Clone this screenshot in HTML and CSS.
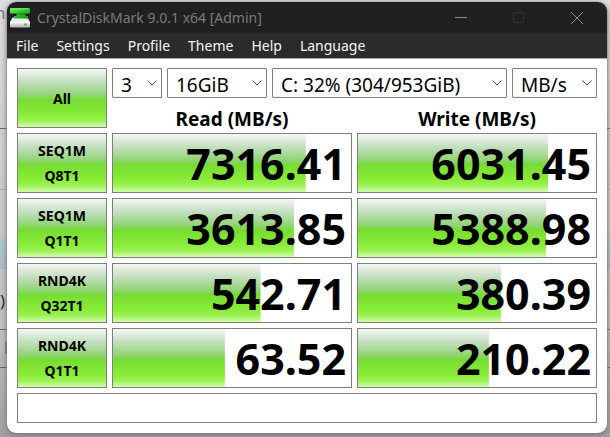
FILE: index.html
```
<!DOCTYPE html>
<html lang="en">
<head>
<meta charset="utf-8">
<title>CrystalDiskMark 9.0.1 x64 [Admin]</title>
<link rel="stylesheet" href="styles.css">
</head>
<body>
<div class="backdrop" aria-hidden="true">
  <span class="peek peek-top">n</span>
  <span class="peek peek-low">)</span>
  <span class="peek-block"></span>
</div>
<main class="window">
  <header class="titlebar">
    <svg class="app-icon" viewBox="0 0 20 20" aria-hidden="true">
      <defs>
        <linearGradient id="g" x1="0" y1="0" x2="1" y2="1"><stop offset="0" stop-color="#7be96a"/><stop offset=".45" stop-color="#2fc42a"/><stop offset="1" stop-color="#0f8f14"/></linearGradient>
        <linearGradient id="d" x1="0" y1="0" x2="0" y2="1"><stop offset="0" stop-color="#e2e8e0"/><stop offset=".5" stop-color="#f0f0f0"/><stop offset="1" stop-color="#aeb2b4"/></linearGradient>
      </defs>
      <path d="M2.500 9.500h15L20 14v4.500q0 1-1 1H1q-1 0-1-1V14z" fill="url(#d)"/>
      <path d="M.5 14.500h19" stroke="#fafafa"/>
      <path d="M1 0h18q1 0 1 1v3.500q0 1-1 1h-3.500V8H18v2.500H4V8h2.500V5.500H1q-1 0-1-1V1q0-1 1-1z" fill="url(#g)"/>
      <path d="M1.500 1h17" stroke="#7be96d"/>
      <path d="M6.500 6h9" stroke="#087c0b"/>
      <path d="M14 16.500h3" stroke="#5cb552" stroke-width="2"/>
    </svg>
    <h1 class="title">CrystalDiskMark 9.0.1 x64 [Admin]</h1>
    <div class="controls">
      <button class="control" aria-label="Minimize"><svg viewBox="0 0 12 12"><path d="M0 5.500h12"/></svg></button>
      <button class="control" aria-label="Maximize" disabled><svg viewBox="0 0 12 12"><path d="M.5.5h10v10H.5z"/></svg></button>
      <button class="control" aria-label="Close"><svg viewBox="0 0 12 12"><path d="M0 0l12 12M12 0L0 12"/></svg></button>
    </div>
  </header>
  <nav class="menu">
    <button>File</button><button>Settings</button><button>Profile</button><button>Theme</button><button>Help</button><button>Language</button>
  </nav>
  <section class="content">
    <table class="results">
      <colgroup><col class="col-test"><col><col></colgroup>
      <thead>
        <tr class="row-options">
          <td rowspan="2"><button class="test">All</button></td>
          <td colspan="2">
            <div class="options">
              <div class="pick pick-count"><select aria-label="Test count"><option>3</option></select><svg viewBox="0 0 10 6"><path d="M.5.5L5 5 9.500.5"/></svg></div>
              <div class="pick pick-size"><select aria-label="Test size"><option>16GiB</option></select><svg viewBox="0 0 10 6"><path d="M.5.5L5 5 9.500.5"/></svg></div>
              <div class="pick pick-drive"><select aria-label="Drive"><option>C: 32% (304/953GiB)</option></select><svg viewBox="0 0 10 6"><path d="M.5.5L5 5 9.500.5"/></svg></div>
              <div class="pick pick-unit"><select aria-label="Unit"><option>MB/s</option></select><svg viewBox="0 0 10 6"><path d="M.5.5L5 5 9.500.5"/></svg></div>
            </div>
          </td>
        </tr>
        <tr class="row-heads"><th scope="col">Read (MB/s)</th><th scope="col">Write (MB/s)</th></tr>
      </thead>
      <tbody>
        <tr>
          <th scope="row"><button class="test">SEQ1M<br>Q8T1</button></th>
          <td><div class="meter" style="--fill:81%">7316.41</div></td>
          <td><div class="meter" style="--fill:80%">6031.45</div></td>
        </tr>
        <tr>
          <th scope="row"><button class="test">SEQ1M<br>Q1T1</button></th>
          <td><div class="meter" style="--fill:76%">3613.85</div></td>
          <td><div class="meter" style="--fill:79%">5388.98</div></td>
        </tr>
        <tr>
          <th scope="row"><button class="test">RND4K<br>Q32T1</button></th>
          <td><div class="meter" style="--fill:62%">542.71</div></td>
          <td><div class="meter" style="--fill:60%">380.39</div></td>
        </tr>
        <tr>
          <th scope="row"><button class="test">RND4K<br>Q1T1</button></th>
          <td><div class="meter" style="--fill:47%">63.52</div></td>
          <td><div class="meter" style="--fill:55%">210.22</div></td>
        </tr>
      </tbody>
    </table>
    <input class="comment" type="text" aria-label="Comment">
  </section>
</main>
</body>
</html>
```
FILE: styles.css
```
* { box-sizing: border-box; }

:root {
  --line: #7f7f7f;
  --green: linear-gradient(#f4f6f4 0%, #c4dfc0 22%, #8ed470 46%, #76dc32 53%, #8aee38 80%, #9cf254 89%, #d4fbb0 100%);
}

body {
  margin: 0;
  padding: 2px 3px 4px 7px;
  min-height: 100vh;
  background: linear-gradient(#dedede, #d2d2d2 30%, #c2c2c2 75%, #a0a0a0);
  font-family: "Noto Sans", "Open Sans", sans-serif;
  color: #000;
}

button, select, input { font: inherit; color: inherit; }

.backdrop {
  position: absolute;
  inset: 0;
  z-index: -1;
  overflow: hidden;
  background:
    linear-gradient(#666, #666) 0 128px / 100% 1px no-repeat,
    linear-gradient(#aaa, #aaa) 0 189px / 100% 1px no-repeat,
    linear-gradient(#b3cbd2, #a9bec5) 0 236px / 100% 33px no-repeat,
    linear-gradient(#666, #666) 0 329px / 100% 1px no-repeat,
    linear-gradient(#666, #666) 0 367px / 100% 1px no-repeat;
}

.peek { position: absolute; font-size: 17px; line-height: 20px; }
.peek-top { left: -5px; top: 3px; color: #777; }
.peek-low { left: 0; top: 291px; color: #222; }
.peek-block { position: absolute; left: 5px; top: 341px; width: 5px; height: 13px; background: #777; }

.window {
  border-radius: 9px;
  overflow: hidden;
  background: #fff;
  box-shadow: 0 0 2px #777, 0 2px 6px #777;
}

.titlebar {
  display: flex;
  align-items: center;
  height: 31px;
  padding-left: 3px;
  background: #202020;
}
.app-icon { width: 20px; height: 20px; margin-right: 7px; }
.title { flex: 1; margin: 0; font-size: 14px; line-height: 20px; font-weight: 400; color: #7b7b7b; }
.controls { display: flex; height: 100%; padding-right: 1px; }
.control { display: grid; place-items: center; width: 58px; padding: 0; border: 0; background: none; color: #8c8c8c; }
.control:disabled { color: #303030; }
.control svg { width: 12px; height: 12px; fill: none; stroke: currentColor; }

.menu {
  display: flex;
  gap: 18px;
  height: 26px;
  padding: 0 9px;
  background: #2b2b2b;
  border-bottom: 1px solid #aaa;
}
.menu button { padding: 0; border: 0; background: none; color: #f4f4f4; font-size: 14px; line-height: 24px; }

.content { padding: 4px 5px 10px; }

.results { width: 100%; table-layout: fixed; border-collapse: separate; border-spacing: 5px; }
.results th, .results td { padding: 0; height: 60px; }
.col-test { width: 90px; }
.results .row-options td[colspan] { height: 30px; }
.results .row-heads th { height: 25px; font-size: 19px; line-height: 18px; vertical-align: bottom; }

.options { display: flex; gap: 5px; height: 30px; }
.pick { display: grid; align-items: center; }
.pick > * { grid-area: 1 / 1; }
.pick svg { justify-self: end; width: 10px; height: 6px; margin-right: 5px; fill: none; stroke: #555; pointer-events: none; }
.pick select {
  appearance: none;
  width: 100%;
  height: 30px;
  padding: 3px 8px 0;
  border: 1px solid var(--line);
  border-radius: 1px;
  background: #fff;
  font-size: 19px;
  line-height: 26px;
}
.pick-count { width: 50px; }
.pick-size { width: 100px; }
.pick-drive { flex: 1; }
.pick-unit { width: 85px; }

.test {
  display: block;
  width: 100%;
  height: 100%;
  padding: 0;
  border: 1px solid var(--line);
  background: var(--green);
  font-size: 14px;
  line-height: 25px;
  font-weight: 700;
}

.meter {
  height: 60px;
  padding-right: 5px;
  border: 1px solid var(--line);
  background: var(--green) 0 0 / var(--fill) 100% no-repeat;
  font-size: 43px;
  line-height: 60px;
  font-weight: 700;
  text-align: right;
}

.comment { display: block; width: calc(100% - 10px); height: 30px; margin: 0 5px; padding: 0 8px; border: 1px solid var(--line); background: #fff; font-size: 14px; }
```
